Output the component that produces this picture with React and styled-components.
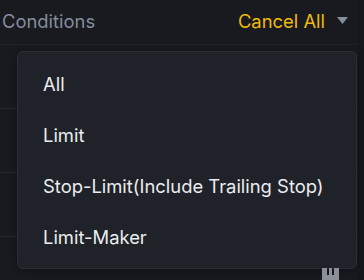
import React from 'react';
import styled, { createGlobalStyle } from 'styled-components';

const GlobalStyle = createGlobalStyle`
  html, body {
    margin: 0;
    padding: 0;
    background: #181a20;
  }
  body {
    font-family: Inter, "Noto Sans", "Liberation Sans", sans-serif;
    -webkit-font-smoothing: antialiased;
  }
`;

const items = ['All', 'Limit', 'Stop-Limit(Include Trailing Stop)', 'Limit-Maker'];

const App = () => {
  return (
    <>
      <GlobalStyle />
      <Page>
        <Table>
          <Header>
            <Title>Conditions</Title>
            <CancelButton>
              Cancel All
              <Caret viewBox="0 0 11 7">
                <path d="M0 0h11L5.5 7z" fill="#848e9c" />
              </Caret>
            </CancelButton>
          </Header>
          <Row />
          <Row />
          <Row />
          <Row />
        </Table>
        <Strip />

        <Menu>
          {items.map((item) => (
            <MenuItem key={item}>{item}</MenuItem>
          ))}
        </Menu>

        <CornerIcon viewBox="0 0 17 14">
          <path d="M0 0h5v7h2V0h3v7h2V0h5v14H0z" fill="#8a8f98" />
        </CornerIcon>
      </Page>
    </>
  );
};

export default App;

const Page = styled.div`
  position: relative;
  width: 364px;
  height: 280px;
  overflow: hidden;
  display: flex;
`;

const Table = styled.div`
  width: 358px;
  display: flex;
  flex-direction: column;
`;

const Strip = styled.div`
  flex: 1;
  background: #15171c;
`;

const Header = styled.div`
  height: 44px;
  flex-shrink: 0;
  display: flex;
  align-items: center;
  justify-content: space-between;
  padding: 0 10px 0 2px;
  border-bottom: 1px solid #1f2228;
`;

const Title = styled.div`
  font-size: 18.4px;
  color: #848e9c;
  padding-bottom: 3px;
`;

const CancelButton = styled.div`
  display: flex;
  align-items: center;
  gap: 12px;
  font-size: 18.4px;
  color: #f0b90b;
  padding-bottom: 3px;
  cursor: pointer;
`;

const Caret = styled.svg`
  width: 11px;
  height: 7px;
`;

const Row = styled.div`
  height: 63px;
  flex-shrink: 0;
  border-bottom: 1px solid #24272d;
`;

const Menu = styled.div`
  position: absolute;
  top: 51px;
  left: 17px;
  width: 340px;
  box-sizing: border-box;
  padding: 6px 0;
  background: #1f2228;
  border: 1px solid #2a2d34;
  border-radius: 6px;
  box-shadow: 0 2px 8px rgba(0, 0, 0, 0.35);
`;

const MenuItem = styled.div`
  height: 51px;
  display: flex;
  align-items: center;
  padding-left: 25px;
  font-size: 18.4px;
  color: #eaecef;
  cursor: pointer;
`;

const CornerIcon = styled.svg`
  position: absolute;
  left: 322px;
  top: 268px;
  width: 17px;
  height: 14px;
`;
